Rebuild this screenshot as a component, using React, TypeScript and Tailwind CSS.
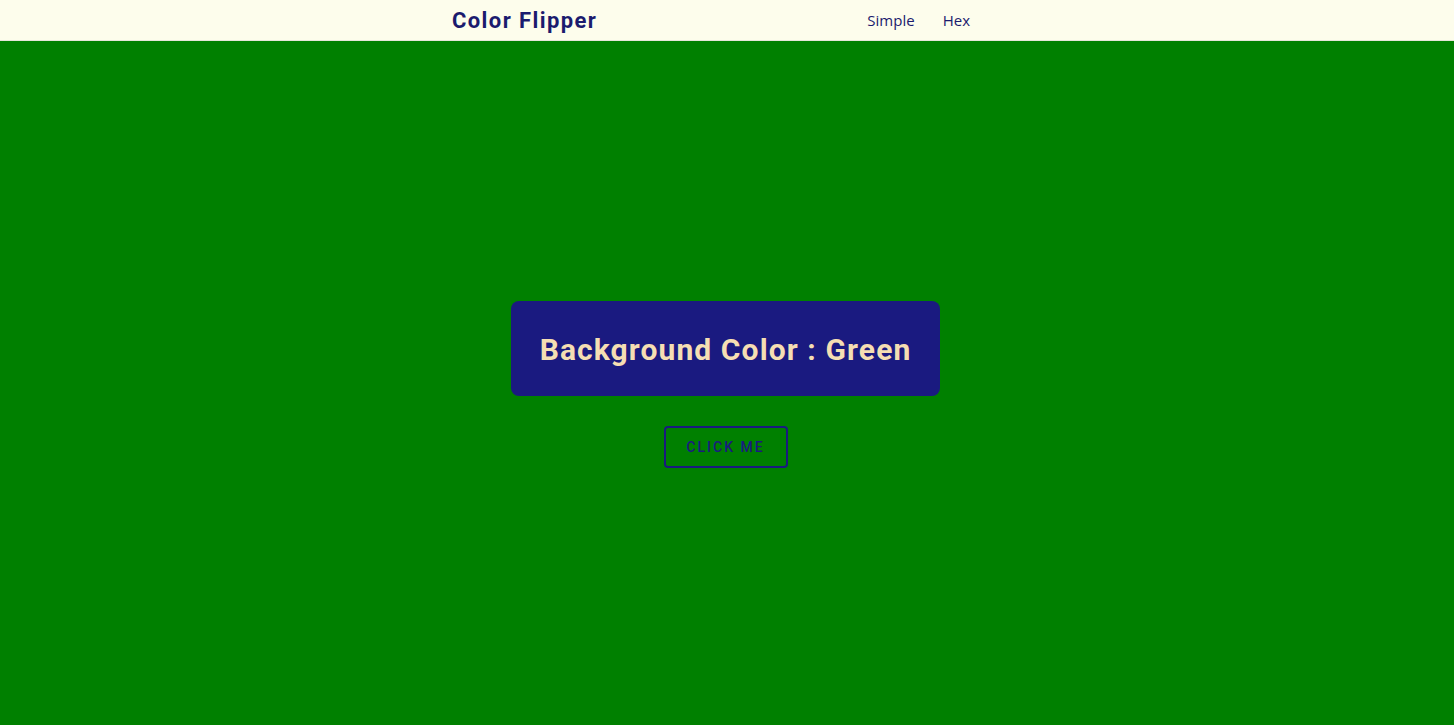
import React, { useState } from 'react';

const colors = ['Green', 'Red', 'Blue', 'Orange', 'Purple'];

const App: React.FC = () => {
  const [idx, setIdx] = useState(0);
  const color = colors[idx];

  return (
    <div className="min-h-screen flex flex-col bg-[#008000]">
      <nav className="h-[41px] bg-[#fdfdec] border-b border-[#e6e6d8] flex items-center shrink-0">
        <div className="w-[518px] ml-[452px] flex items-center justify-between">
          <h4 className="font-['Roboto',sans-serif] font-bold text-[22px] tracking-[1.4px] text-[#1b1b6e]">
            Color Flipper
          </h4>
          <ul className="flex gap-[28px] font-['Open_Sans',sans-serif] text-[15px] text-[#1b1b6e]">
            <li>Simple</li>
            <li>Hex</li>
          </ul>
        </div>
      </nav>

      <main className="flex-1 flex flex-col items-center justify-center pr-[3px] pt-[3px]">
        <div className="w-[429px] h-[95px] rounded-lg bg-[#1a1a80] flex items-center justify-center">
          <h2 className="font-['Roboto',sans-serif] font-bold text-[30px] tracking-[1.1px] text-[#f5deb3] mt-[2px]">
            Background Color : <span>{color}</span>
          </h2>
        </div>
        <button
          onClick={() => setIdx((idx + 1) % colors.length)}
          className="mt-[30px] w-[124px] h-[42px] border-2 border-[#1a1a80] rounded text-[#1a1a80] font-['Roboto',sans-serif] font-medium text-[14px] tracking-[2px] uppercase"
        >
          Click me
        </button>
      </main>
    </div>
  );
};

export default App;
